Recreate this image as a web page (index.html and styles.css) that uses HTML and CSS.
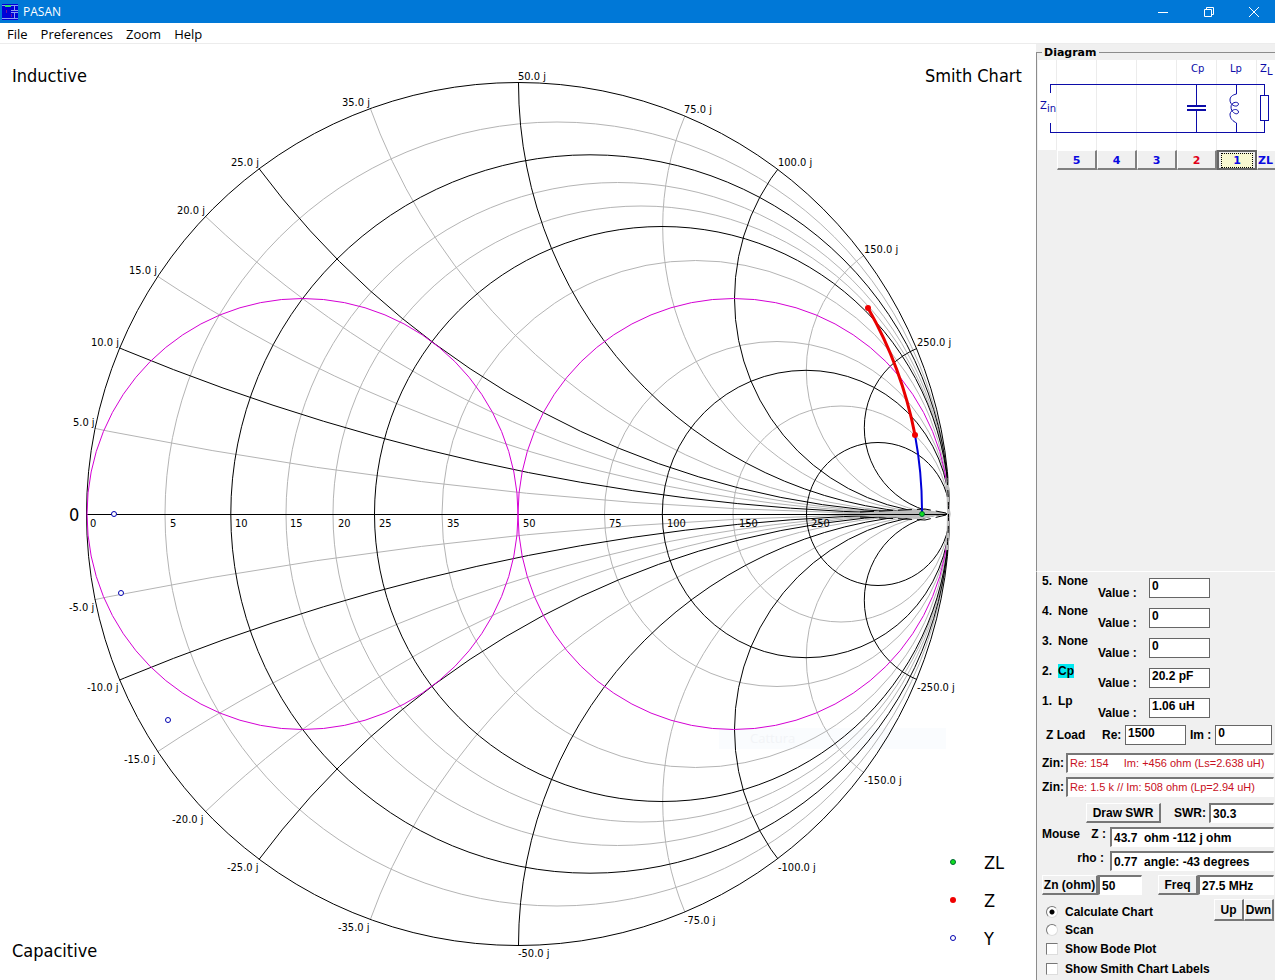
FILE: index.html
```html
<!DOCTYPE html>
<html lang="en">
<head>
<meta charset="utf-8">
<title>PASAN</title>
<link rel="stylesheet" href="styles.css">
</head>
<body>
<header class="titlebar">
  <svg class="app-icon" viewBox="0 0 16 16" aria-hidden="true">
    <rect width="16" height="16" fill="#0000d8"/>
    <path d="M0 1.500H3M9 1.500H16M0 14.500H16M12.500 1V6M12.500 9V15M9 6.500H16M9 8.500H16" stroke="#8c9cf0" fill="none"/>
    <rect x="3" y="1" width="6" height="2" fill="#30e070"/>
    <path d="M4.500 6V9M9.500 10V13" stroke="#7010a0"/>
  </svg>
  <span class="app-name">PASAN</span>
  <div class="window-buttons">
    <button class="window-button" aria-label="Minimize"><svg viewBox="0 0 12 12"><path d="M1 6.500H11"/></svg></button>
    <button class="window-button" aria-label="Restore"><svg viewBox="0 0 12 12"><path d="M1.500 3.500H8.500V10.500H1.500ZM3.500 3.500V1.500H10.500V8.500H8.500"/></svg></button>
    <button class="window-button" aria-label="Close"><svg viewBox="0 0 12 12"><path d="M1 1L11 11M11 1L1 11"/></svg></button>
  </div>
</header>
<nav class="menubar">
  <button class="menu">File</button>
  <button class="menu">Preferences</button>
  <button class="menu">Zoom</button>
  <button class="menu">Help</button>
</nav>
<div class="workspace">
  <main class="chart-area">
    <svg class="chart" viewBox="0 44 1036 936" preserveAspectRatio="xMinYMin meet" role="img" aria-label="Smith Chart">
      <defs><clipPath id="disc"><circle cx="518" cy="514" r="432"/></clipPath></defs>
      <rect class="ghost" x="719" y="728" width="227" height="21"/>
      <text class="ghost-text" x="750" y="743">Cattura</text>
      <g class="grid">
        <g class="minor">
          <circle cx="557" cy="514" r="392"/>
          <circle cx="617.500" cy="514" r="331.500"/>
          <circle cx="641" cy="514" r="308"/>
          <circle cx="695.500" cy="514" r="253.500"/>
          <circle cx="777" cy="514" r="172.500"/>
          <circle cx="841" cy="514" r="108"/>
        </g>
        <g class="minor" clip-path="url(#disc)">
          <circle cx="949" cy="-3796" r="4310"/><circle cx="949" cy="4824" r="4310"/>
          <circle cx="949" cy="-922.700" r="1436.700"/><circle cx="949" cy="1950.700" r="1436.700"/>
          <circle cx="949" cy="-563.500" r="1077.500"/><circle cx="949" cy="1591.500" r="1077.500"/>
          <circle cx="949" cy="-101.700" r="615.700"/><circle cx="949" cy="1129.700" r="615.700"/>
          <circle cx="950" cy="226.700" r="287.300"/><circle cx="950" cy="801.300" r="287.300"/>
          <circle cx="950" cy="370.300" r="143.700"/><circle cx="950" cy="657.700" r="143.700"/>
        </g>
        <g class="major" clip-path="url(#disc)">
          <circle cx="949" cy="-1641" r="2155"/><circle cx="949" cy="2669" r="2155"/>
          <circle cx="949" cy="-348" r="862"/><circle cx="949" cy="1376" r="862"/>
          <circle cx="949.500" cy="83" r="431"/><circle cx="949.500" cy="945" r="431"/>
          <circle cx="950" cy="298.500" r="215.500"/><circle cx="950" cy="729.500" r="215.500"/>
          <circle cx="950.500" cy="427.800" r="86.200"/><circle cx="950.500" cy="600.200" r="86.200"/>
        </g>
        <g class="major">
          <circle cx="518" cy="514" r="431.500"/>
          <circle cx="590" cy="514" r="359.200"/>
          <circle cx="662" cy="514" r="287.500"/>
          <circle cx="806" cy="514" r="143.700"/>
          <circle cx="878" cy="514" r="71.500"/>
        </g>
        <path class="dense" d="M830 514L922 509L947 513.500L922 519Z"/>
        <path class="axis" d="M87 514.500H949"/>
        <path class="core" d="M860 512L925 509L946 513M860 517L925 520L946 515"/>
        <g class="unit">
          <circle cx="733.500" cy="514" r="215.500"/>
          <circle cx="302.500" cy="514" r="215.500"/>
        </g>
        <path class="rim" d="M947 478Q950 514 947 550"/>
        <path class="rim-dash" d="M947 478Q950 514 947 550"/>
      </g>
      <g class="label">
        <text x="342" y="106">35.0 j</text><text x="231" y="166">25.0 j</text>
        <text x="177" y="214">20.0 j</text><text x="129" y="274">15.0 j</text>
        <text x="91" y="346">10.0 j</text><text x="73" y="426">5.0 j</text>
        <text x="518" y="80">50.0 j</text><text x="684" y="113">75.0 j</text>
        <text x="778" y="166">100.0 j</text><text x="864" y="253">150.0 j</text>
        <text x="917" y="346">250.0 j</text>
        <text x="69" y="611">-5.0 j</text><text x="87" y="691">-10.0 j</text>
        <text x="124" y="763">-15.0 j</text><text x="172" y="823">-20.0 j</text>
        <text x="227" y="871">-25.0 j</text><text x="338" y="931">-35.0 j</text>
        <text x="518" y="957">-50.0 j</text><text x="684" y="924">-75.0 j</text>
        <text x="778" y="871">-100.0 j</text><text x="864" y="784">-150.0 j</text>
        <text x="917" y="691">-250.0 j</text>
        <text x="90" y="527">0</text><text x="170" y="527">5</text><text x="235" y="527">10</text>
        <text x="290" y="527">15</text><text x="338" y="527">20</text><text x="379" y="527">25</text>
        <text x="447" y="527">35</text><text x="523" y="527">50</text><text x="609" y="527">75</text>
        <text x="667" y="527">100</text><text x="739" y="527">150</text><text x="811" y="527">250</text>
      </g>
      <g class="heading">
        <text x="12" y="82">Inductive</text>
        <text x="925" y="82">Smith Chart</text>
        <text x="12" y="957">Capacitive</text>
        <text x="69" y="521">0</text>
        <text x="984" y="869">ZL</text>
        <text x="984" y="907">Z</text>
        <text x="984" y="945">Y</text>
      </g>
      <path class="trace-l" d="M922 514A417.500 417.500 0 0 0 915 435"/>
      <path class="trace-c" d="M915 435A417.500 417.500 0 0 0 868 308"/>
      <circle class="dot-z" cx="868" cy="308" r="3"/><circle class="dot-z" cx="915" cy="435" r="3"/>
      <circle class="dot-zl" cx="922" cy="514" r="2.500"/>
      <circle class="dot-y" cx="114" cy="514" r="2.500"/><circle class="dot-y" cx="121" cy="593" r="2.500"/>
      <circle class="dot-y" cx="168" cy="720" r="2.500"/>
      <circle class="dot-zl" cx="953" cy="862" r="2.500"/>
      <circle class="dot-z" cx="953" cy="900" r="3"/>
      <circle class="dot-y" cx="953" cy="938" r="2.500"/>
    </svg>
  </main>
  <aside class="panel">
    <fieldset class="diagram">
      <legend class="diagram-title">Diagram</legend>
      <svg class="circuit" viewBox="1038 60 237 90" preserveAspectRatio="xMinYMin slice" role="img" aria-label="Matching network">
        <path class="cell-lines" d="M1056.500 60V150M1096.500 60V150M1136.500 60V150M1176.500 60V150M1216.500 60V150M1256.500 60V150"/>
        <path class="wire" d="M1050.500 93V84.500H1264.500V95M1050.500 123V132.500H1264.500V121M1196.500 84V105M1196.500 110V132M1236.500 84V94M1236.500 123V132M1260.500 95.500H1268.500V120.500H1260.500Z"/>
        <path class="plate" d="M1187 106H1206M1187 110H1206"/>
        <path class="coil" d="M1236.500 94C1232 95 1230 97 1230 100C1230 106 1238 108 1238.500 104C1238 101 1231 102 1231 107C1231 113 1238 116 1238.500 112C1238 108 1231 109 1230 114C1230 119 1233 121 1236.500 123"/>
        <g class="part">
          <text x="1191" y="72">Cp</text><text x="1230" y="72">Lp</text>
          <text x="1260" y="72">Z</text><text x="1267" y="75">L</text>
          <text x="1040" y="109">Z</text><text x="1047" y="112">in</text>
        </g>
      </svg>
      <div class="slots">
        <button class="slot">5</button><button class="slot">4</button><button class="slot">3</button><button class="slot slot-marked">2</button><button class="slot slot-active"><span class="focus">1</span></button><button class="slot slot-load">ZL</button>
      </div>
    </fieldset>
    <form class="controls">
      <div class="component"><span class="kind">5.&ensp;None</span><label class="value-label" for="v5">Value :</label><input class="value" id="v5" value="0"></div>
      <div class="component"><span class="kind">4.&ensp;None</span><label class="value-label" for="v4">Value :</label><input class="value" id="v4" value="0"></div>
      <div class="component"><span class="kind">3.&ensp;None</span><label class="value-label" for="v3">Value :</label><input class="value" id="v3" value="0"></div>
      <div class="component"><span class="kind">2.&ensp;<mark class="mark">Cp</mark></span><label class="value-label" for="v2">Value :</label><input class="value" id="v2" value="20.2 pF"></div>
      <div class="component"><span class="kind">1.&ensp;Lp</span><label class="value-label" for="v1">Value :</label><input class="value" id="v1" value="1.06 uH"></div>
      <div class="row row-load"><span class="load-name">Z Load</span><label class="load-label" for="re">Re:</label><input class="value" id="re" value="1500"><label for="im">Im :</label><input class="value value-im" id="im" value="0"></div>
      <div class="row"><label class="zin-label" for="zs">Zin:</label><input class="sunken readout" id="zs" value="Re: 154     Im: +456 ohm (Ls=2.638 uH)" readonly></div>
      <div class="row"><label class="zin-label" for="zp">Zin:</label><input class="sunken readout" id="zp" value="Re: 1.5 k // Im: 508 ohm (Lp=2.94 uH)" readonly></div>
      <div class="row row-swr"><button class="raised draw" type="button">Draw SWR</button><label class="swr-label" for="swr">SWR:</label><input class="sunken" id="swr" value="30.3"></div>
      <div class="row"><label class="mouse-label" for="mz"><span>Mouse</span><span>Z :</span></label><input class="sunken" id="mz" value="43.7  ohm -112 j ohm"></div>
      <div class="row"><label class="mouse-label rho" for="rho">rho :</label><input class="sunken" id="rho" value="0.77  angle: -43 degrees"></div>
      <div class="row"><button class="raised zn" type="button">Zn (ohm)</button><input class="sunken zn-value" aria-label="Zn (ohm)" value="50"><button class="raised freq" type="button">Freq</button><input class="sunken" aria-label="Freq" value="27.5 MHz"></div>
      <div class="bottom">
        <div class="options">
          <label class="option"><input class="radio" type="radio" name="mode" checked>Calculate Chart</label>
          <label class="option"><input class="radio" type="radio" name="mode">Scan</label>
          <label class="option option-check"><input class="check" type="checkbox">Show Bode Plot</label>
          <label class="option option-check"><input class="check" type="checkbox">Show Smith Chart Labels</label>
        </div>
        <div class="steps"><button class="raised step" type="button">Up</button><button class="raised step" type="button">Dwn</button></div>
      </div>
    </form>
  </aside>
</div>
</body>
</html>
```
FILE: styles.css
```css
* { box-sizing: border-box; }
body {
  margin: 0;
  min-height: 100vh;
  display: flex;
  flex-direction: column;
  background: #fff;
  color: #000;
  font: 13px/20px "Open Sans", "Noto Sans", sans-serif;
  overflow: hidden;
}
button, input { font: inherit; color: inherit; margin: 0; }
button { padding: 0; border: 0; background: none; white-space: nowrap; }

.titlebar { display: flex; align-items: center; height: 23px; padding-left: 2px; background: #0078d7; color: #fff; }
.app-icon { width: 16px; height: 16px; shape-rendering: crispEdges; }
.app-name { margin-left: 5px; font-size: 12px; }
.window-buttons { display: flex; margin-left: auto; }
.window-button { display: grid; place-items: center; width: 46px; height: 20px; }
.window-button:last-child { width: 43px; }
.window-button svg { width: 12px; height: 12px; fill: none; stroke: #fff; }

.menubar { display: flex; gap: 13px; height: 21px; padding-left: 7px; border-bottom: 1px solid #ececec; }
.menu { line-height: 22px; }

.workspace { flex: 1; display: flex; align-items: stretch; }
.chart-area { flex: 1; min-width: 0; }
.chart { display: block; width: 100%; height: auto; }
.ghost { fill: #fafcfe; }
.ghost-text { fill: #f2f4f7; font: 13px "Open Sans", sans-serif; }
.grid { fill: none; stroke-width: 1; }
.minor { stroke: #b4b4b4; }
.major { stroke: #000; }
.axis { stroke: #000; }
.unit { stroke: #d400d4; }
.dense { fill: #bdbdbd; }
.core { stroke: #000; stroke-dasharray: 14 5; }
.rim { stroke: #bdbdbd; stroke-width: 3; }
.rim-dash { stroke: #000; stroke-dasharray: 7 5; }
.label { font: 11px "DejaVu Sans Condensed", "DejaVu Sans", sans-serif; }
.heading { font: 18px "DejaVu Sans Condensed", "DejaVu Sans", sans-serif; }
.trace-l { fill: none; stroke: #0000d8; stroke-width: 2; }
.trace-c { fill: none; stroke: #e80000; stroke-width: 3; }
.dot-z { fill: #f00000; }
.dot-zl { fill: #10e020; stroke: #063; }
.dot-y { fill: #fff; stroke: #0000b0; }

.panel {
  display: flex;
  flex-direction: column;
  width: 239px;
  padding-top: 1px;
  background: #f0f0f0;
  font: bold 12px/14px "Liberation Sans", sans-serif;
  overflow: hidden;
}
.diagram { flex: 1; min-width: 0; margin: 0; padding: 0 0 0 1px; border: solid #8c8c8c; border-width: 1px 0 0 1px; }
.diagram-title { margin-left: 4px; padding: 0 2px; font: bold 11px/15px "DejaVu Sans", sans-serif; }
.circuit { display: block; width: 100%; height: 90px; background: #fff; }
.circuit path { fill: none; shape-rendering: crispEdges; }
.cell-lines { stroke: #ececec; }
.wire { stroke: #0c0ca8; }
.plate { stroke: #0c0ca8; stroke-width: 2; }
.circuit .coil { stroke: #0c0ca8; shape-rendering: auto; }
.part { fill: #0c0ca8; font: 10px "DejaVu Sans", sans-serif; }
.slots { display: flex; padding-left: 19px; }
.slot {
  flex: none;
  width: 40px;
  height: 20px;
  padding-top: 2px;
  border: solid;
  border-width: 1px 2px 2px 1px;
  border-color: #fff #808080 #808080 #fff;
  background: #f0f0f0;
  color: #0a0ae0;
  font: bold 11px/15px "DejaVu Sans", sans-serif;
}
.slot-load { flex: 1; width: auto; border-right: 0; text-align: left; }
.slot-marked { color: #e00018; }
.slot-active { padding: 1px 2px; border: 2px solid #666; }
.focus { display: block; border: 1px dotted #000; background: #f8f8d0; line-height: 13px; }

.controls { padding: 2px 1px 1px 5px; border-top: 1px solid #fff; border-left: 1px solid #8c8c8c; }
.component { display: flex; align-items: center; height: 30px; padding-bottom: 2px; }
.kind { width: 56px; align-self: flex-start; }
.mark { background: #00e8f0; color: inherit; }
.value-label { width: 51px; padding-top: 10px; }
.value { width: 61px; height: 20px; padding: 0 2px 4px; border: 1px solid #666; border-radius: 0; background: #fff; }
.row { display: flex; align-items: center; height: 24px; }
.row-load { margin: -1px 0 4px; padding-left: 4px; }
.load-name { width: 56px; }
.load-label { width: 23px; }
.row-load .value { margin-right: 4px; }
.row-load .value-im { width: 57px; margin: 0 0 0 4px; }
.sunken {
  flex: 1;
  min-width: 0;
  height: 20px;
  padding: 0 2px;
  border: solid;
  border-width: 2px 1px 1px 2px;
  border-color: #777 #fff #fff #777;
  border-radius: 0;
  background: #fff;
}
.readout { padding-bottom: 2px; color: #c80f22; font-weight: normal; font-size: 11px; }
.raised { height: 20px; border: solid; border-width: 1px 2px 2px 1px; border-color: #fff #777 #777 #fff; background: #f0f0f0; }
.zin-label { width: 24px; }
.row-swr { margin-top: 2px; padding-left: 44px; }
.draw { width: 75px; }
.swr-label { margin: 0 3px 0 13px; }
.mouse-label { display: flex; justify-content: space-between; width: 68px; padding: 0 4px 6px 0; }
.rho { justify-content: flex-end; padding-right: 6px; }
.zn { width: 56px; }
.zn-value { flex: none; width: 44px; }
.freq { width: 40px; margin-left: 16px; }
.bottom { display: flex; justify-content: space-between; }
.options { padding-top: 6px; white-space: nowrap; }
.option { display: flex; align-items: center; gap: 7px; height: 18px; padding-left: 4px; }
.option-check { height: 20px; }
.radio, .check { appearance: none; width: 12px; height: 12px; border: 1px solid; border-color: #777 #ddd #ddd #777; background: #fff; }
.radio { border-radius: 50%; }
.radio:checked { background: radial-gradient(circle, #000 0 2px, #fff 3px); }
.steps { display: flex; padding-top: 2px; margin-left: -30px; }
.step { width: 30px; height: 22px; }
```
